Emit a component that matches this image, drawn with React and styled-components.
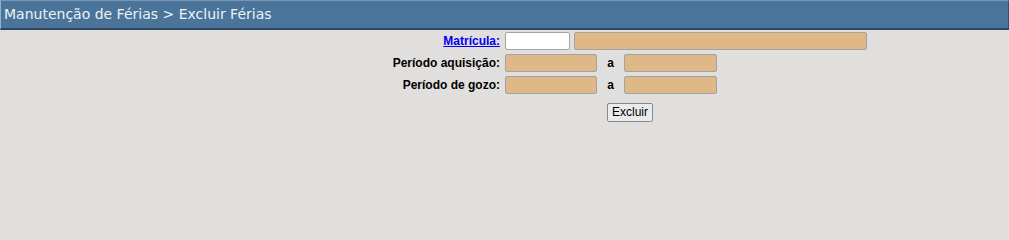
import styled, { createGlobalStyle } from 'styled-components';

const GlobalStyle = createGlobalStyle`
  html, body {
    margin: 0;
    background: #e0dfde;
    font-family: "Liberation Sans", Arial, sans-serif;
  }
`;

const Page = styled.div`
  background: #e0dfde;
`;

const TitleBar = styled.div`
  height: 27px;
  background: #4a7499;
  border-top: 1px solid #7b97b3;
  border-left: 1px solid #9ab0c6;
  border-bottom: 2px solid #2c4560;
  border-right: 1px solid #35536f;
  color: #eef2f6;
  font-family: "DejaVu Sans", Verdana, sans-serif;
  font-size: 14px;
  line-height: 27px;
  padding-left: 3px;
`;

const Form = styled.form`
  display: grid;
  grid-template-columns: 500px 1fr;
  column-gap: 5px;
  row-gap: 4px;
  padding-top: 2px;
`;

const Label = styled.label`
  justify-self: end;
  align-self: center;
  font-size: 12px;
  font-weight: bold;
  color: #000;
`;

const LinkLabel = styled.a`
  justify-self: end;
  align-self: center;
  font-size: 12px;
  font-weight: bold;
  color: #0000ee;
  text-decoration: underline;
  cursor: pointer;
`;

const Fields = styled.div`
  display: flex;
  align-items: center;
`;

const Input = styled.input`
  box-sizing: border-box;
  width: ${({ $w }) => $w}px;
  height: 18px;
  margin: 0 4px 0 0;
  padding: 1px 3px;
  border: 1px solid #a3a3a3;
  border-radius: 2px;
  background: ${({ $readOnly }) => ($readOnly ? '#deb887' : '#fff')};
  font-family: "Liberation Sans", Arial, sans-serif;
  font-size: 11px;
  outline: none;
`;

const Sep = styled.span`
  font-size: 12px;
  font-weight: bold;
  width: 19px;
  text-align: center;
  margin: 0 4px 0 0;
`;

const ButtonCell = styled.div`
  grid-column: 2;
  padding: 4px 0 0 102px;
`;

const Button = styled.button`
  box-sizing: border-box;
  height: 19px;
  padding: 0 4px;
  border: 1px solid #8a8a8a;
  border-radius: 2px;
  background: #ebebeb;
  color: #000;
  font-family: "Liberation Sans", Arial, sans-serif;
  font-size: 12px;
`;

export default function App() {
  return (
    <Page>
      <GlobalStyle />
      <TitleBar>Manutenção de Férias &gt; Excluir Férias</TitleBar>
      <Form onSubmit={(e) => e.preventDefault()}>
        <LinkLabel>Matrícula:</LinkLabel>
        <Fields>
          <Input $w={65} />
          <Input $w={293} $readOnly readOnly />
        </Fields>
        <Label>Período aquisição:</Label>
        <Fields>
          <Input $w={92} $readOnly readOnly />
          <Sep>a</Sep>
          <Input $w={93} $readOnly readOnly />
        </Fields>
        <Label>Período de gozo:</Label>
        <Fields>
          <Input $w={92} $readOnly readOnly />
          <Sep>a</Sep>
          <Input $w={93} $readOnly readOnly />
        </Fields>
        <ButtonCell>
          <Button type="submit">Excluir</Button>
        </ButtonCell>
      </Form>
    </Page>
  );
}
